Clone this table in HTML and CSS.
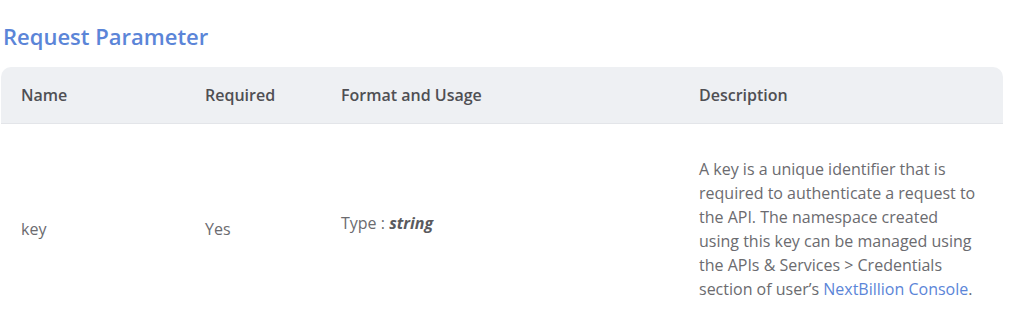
FILE: index.html
```html
<!DOCTYPE html>
<html lang="en">
<head>
    <meta charset="UTF-8">
    <meta name="viewport" content="width=device-width, initial-scale=1.0">
    <title>Request Parameter</title>
    <link rel="stylesheet" href="styles.css">
</head>
<body>
    <h2 class="section-title">Request Parameter</h2>

    <table class="params">
        <thead>
            <tr>
                <th class="col-name">Name</th>
                <th class="col-required">Required</th>
                <th class="col-format">Format and Usage</th>
                <th class="col-desc">Description</th>
            </tr>
        </thead>
        <tbody>
            <tr>
                <td>key</td>
                <td>Yes</td>
                <td><p class="type">Type : <em>string</em></p></td>
                <td>A key is a unique identifier that is required to authenticate a request to the API. The namespace created using this key can be managed using the APIs &amp; Services &gt; Credentials section of user’s <a href="#">NextBillion Console</a>.</td>
            </tr>
        </tbody>
    </table>
</body>
</html>
```

FILE: styles.css
```css
body {
    font-family: 'Open Sans', Lato, sans-serif;
    margin: 0;
    padding: 0 20px 0 1px;
    color: #6b6b6f;
    background: #fff;
}
.section-title {
    margin: 22px 0 17px 2px;
    font-size: 22px;
    font-weight: 600;
    color: #5b85d8;
    line-height: 28px;
}
.params {
    width: 1002px;
    border-collapse: separate;
    border-spacing: 0;
    table-layout: fixed;
    font-size: 16px;
}
.params th,
.params td {
    box-sizing: border-box;
}
.params th {
    background: #eef0f3;
    text-align: left;
    font-weight: 600;
    color: #4f4f53;
    height: 57px;
    padding: 0 20px;
    border-bottom: 1px solid #e3e5e9;
}
.params th:first-child { border-top-left-radius: 10px; }
.params th:last-child { border-top-right-radius: 10px; }
.col-name { width: 184px; }
.col-required { width: 136px; }
.col-format { width: 358px; }
.params td {
    padding: 33px 20px 33px 20px;
    line-height: 24px;
    vertical-align: middle;
}
.params td:last-child { padding-right: 22px; }
.type { margin: 0 0 12px; }
.type em { font-weight: 700; color: #5a5a5e; }
.params a { color: #5b85d8; text-decoration: none; }
```
